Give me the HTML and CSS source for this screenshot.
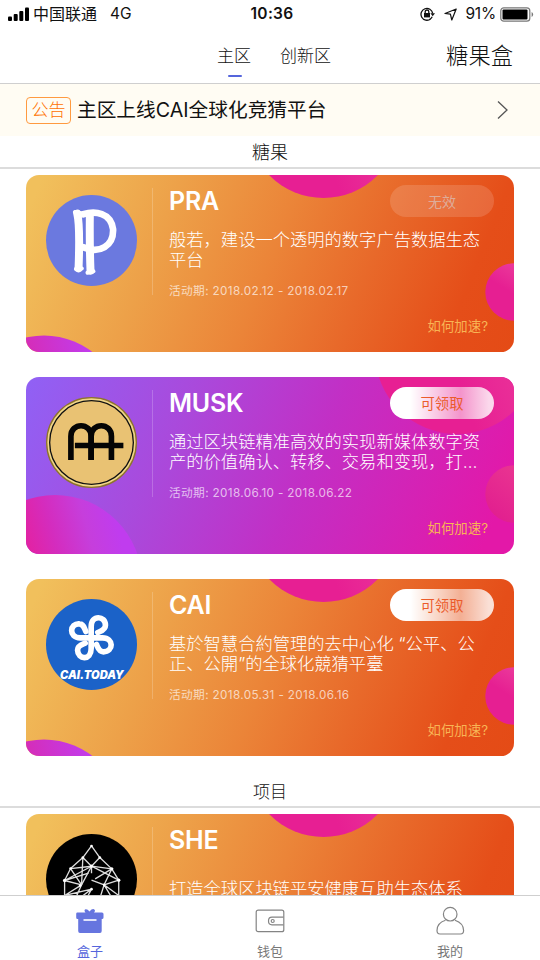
FILE: index.html
```html
<!DOCTYPE html>
<html lang="zh-CN">
<head>
<meta charset="utf-8">
<title>糖果盒</title>
<link rel="stylesheet" href="styles.css">
</head>
<body>
<svg width="0" height="0" class="defs">
  <defs>
    <linearGradient id="pinkTop" x1="0.55" y1="0.8" x2="1.1" y2="0.6"><stop offset="0" stop-color="#e71f93"/><stop offset="1" stop-color="#ec3c9c"/></linearGradient>
    <linearGradient id="pinkSide" x1="0.2" y1="0.8" x2="0.7" y2="0"><stop offset="0" stop-color="#e61f92"/><stop offset="0.4" stop-color="#e61f92"/><stop offset="1" stop-color="#ec409d"/></linearGradient>
    <linearGradient id="violet" x1="0.38" y1="0.1" x2="0.8" y2="0"><stop offset="0" stop-color="#d62cb6"/><stop offset="1" stop-color="#c03df0"/></linearGradient>
    <linearGradient id="violetBig" x1="0.3" y1="0.3" x2="0.85" y2="0.15"><stop offset="0" stop-color="#e6209c"/><stop offset="0.35" stop-color="#d42cbe"/><stop offset="0.7" stop-color="#c63edc"/><stop offset="1" stop-color="#c03cee"/></linearGradient>
    <linearGradient id="redSide" x1="0" y1="0.7" x2="0.6" y2="0"><stop offset="0" stop-color="#e2208f"/><stop offset="1" stop-color="#ea3691"/></linearGradient>
    <symbol id="orangeArt" viewBox="0 0 488 177">
      <circle cx="297.5" cy="-53" r="76" fill="url(#pinkTop)"/>
      <circle cx="488" cy="117" r="28.7" fill="url(#pinkSide)"/>
      <circle cx="18" cy="239.5" r="79" fill="url(#violet)"/>
    </symbol>
    <symbol id="purpleArt" viewBox="0 0 488 177">
      <circle cx="431" cy="-25" r="82" fill="url(#pinkTop)"/>
      <circle cx="488" cy="117" r="28.7" fill="url(#redSide)"/>
      <circle cx="29" cy="205" r="87" fill="url(#violetBig)"/>
    </symbol>
  </defs>
</svg>
<div class="app">
  <header class="status">
    <div class="status-left">
      <svg width="22" height="14" viewBox="0 0 22 14"><rect x="0" y="9.5" width="4" height="4.5" rx="1"/><rect x="5.7" y="7" width="4" height="7" rx="1"/><rect x="11.3" y="4" width="4" height="10" rx="1"/><rect x="17" y="0.5" width="4" height="13.5" rx="1"/></svg>
      <span class="carrier">中国联通</span><span class="network">4G</span>
    </div>
    <div class="clock">10:36</div>
    <div class="status-right">
      <svg width="16" height="14" viewBox="0 0 16 14" fill="none" stroke="#111" stroke-width="1.3"><path d="M10.6 11.9A5.9 5.9 0 1 1 12.7 6.3M12.2 9.7a5.9 5.9 0 0 1-2.8 2.8"/><path d="M10.4 6.2h4.6l-2.3 3z" fill="#111" stroke="none"/><rect x="4" y="6" width="6" height="4.4" fill="#111" stroke="none"/><path d="M5.2 6V4.8a1.8 1.8 0 0 1 3.6 0V6"/></svg>
      <svg class="arrow" width="13" height="13" viewBox="0 0 13 13" fill="none" stroke="#111" stroke-width="1.2" stroke-linejoin="round"><path d="M12.200 1 1 5.500 6.400 6.200 7.800 12z"/></svg>
      <span class="percent">91%</span>
      <svg width="34" height="15" viewBox="0 0 34 15"><rect x=".8" y=".8" width="29" height="13.4" rx="3" fill="none" stroke="#777" stroke-width="1.2"/><rect x="2.5" y="2.5" width="25" height="10" rx="1"/><path d="M31.6 5v5q1.5-.7 1.5-2.5T31.6 5" fill="#777"/></svg>
    </div>
  </header>
  <nav class="top">
    <a class="toptab active">主区</a>
    <a class="toptab">创新区</a>
    <a class="boxlink">糖果盒</a>
  </nav>
  <div class="notice">
    <span class="tag">公告</span>
    <span class="notice-text">主区上线CAI全球化竞猜平台</span>
    <svg width="12" height="20" viewBox="0 0 12 20" fill="none" stroke="#555" stroke-width="1.3"><path d="M1 1.5 10 10 1 18.5"/></svg>
  </div>
  <main class="list">
    <h2 class="section">糖果</h2>
    <article class="card orange">
      <svg class="art"><use href="#orangeArt"/></svg>
      <div class="logo">
        <svg width="91" height="91" viewBox="77 73 274 274"><circle cx="214" cy="210" r="137" fill="#6b79df"/><g fill="none" stroke="#fff" stroke-linecap="round" stroke-linejoin="round"><path d="M171 129Q180 165 175 294" stroke-width="24"/><path d="M209 137Q208 220 211 301" stroke-width="24"/><path d="M164 124L182 128M167 296L185 294M202 307L220 303" stroke-width="12"/><path d="M189 131C225 120 272 126 279 176C281 226 239 252 188 230" stroke-width="20"/></g></svg>
      </div>
      <div class="info">
        <div class="head"><h3>PRA</h3><span class="btn off">无效</span></div>
        <div class="desc"><p>般若，建设一个透明的数字广告数据生态<br>平台</p></div>
        <p class="date">活动期: 2018.02.12 - 2018.02.17</p>
        <a class="more">如何加速?</a>
      </div>
    </article>
    <article class="card purple">
      <svg class="art"><use href="#purpleArt"/></svg>
      <div class="logo">
        <svg width="91" height="91" viewBox="77 80 274 274"><circle cx="214" cy="217" r="135" fill="#f0d587" stroke="#8d742d" stroke-width="4"/><circle cx="214" cy="217" r="126" fill="#e9c273" stroke="#111" stroke-width="4"/><g fill="none" stroke="#050505" stroke-width="17"><path d="M152 270V198C152 156 213 156 213 198V270"/><path d="M213 270V198C213 156 274 156 274 198V270"/><path d="M164 226H310"/></g></svg>
      </div>
      <div class="info">
        <div class="head"><h3>MUSK</h3><span class="btn">可领取</span></div>
        <div class="desc"><p>通过区块链精准高效的实现新媒体数字资<br>产的价值确认、转移、交易和变现，打<span class="dots">…</span></p></div>
        <p class="date">活动期: 2018.06.10 - 2018.06.22</p>
        <a class="more">如何加速?</a>
      </div>
    </article>
    <article class="card orange">
      <svg class="art"><use href="#orangeArt"/></svg>
      <div class="logo">
        <svg width="91" height="91" viewBox="77 86 274 274"><circle cx="214" cy="223" r="137" fill="#1b62c8"/><g fill="none" stroke="#fff" stroke-width="17" stroke-linecap="round"><path d="M213 203V170C213 132 256 136 256 165C256 179 243 182 233 187"/><path d="M213 203H247C282 203 281 245 250 245C236 245 233 232 229 223"/><path d="M213 203V235C213 272 173 270 172 240C172 226 185 223 195 219"/><path d="M213 203H180C144 203 148 158 178 161C192 162 192 174 197 184"/></g><text x="119" y="327" textLength="192" lengthAdjust="spacingAndGlyphs" class="logo-text">CAI.TODAY</text></svg>
      </div>
      <div class="info">
        <div class="head"><h3>CAI</h3><span class="btn">可领取</span></div>
        <div class="desc"><p>基於智慧合約管理的去中心化 “公平、公<br>正、公開”的全球化競猜平臺</p></div>
        <p class="date">活动期: 2018.05.31 - 2018.06.16</p>
        <a class="more">如何加速?</a>
      </div>
    </article>
    <h2 class="section second">项目</h2>
    <article class="card orange">
      <svg class="art"><use href="#orangeArt"/></svg>
      <div class="logo">
        <svg width="91" height="91" viewBox="77 190 274 274"><circle cx="214" cy="327" r="137"/><g fill="none" stroke="#ddd" stroke-width="4" stroke-linejoin="round"><path d="M214 226 188 261 151 294 133 330V375L180 420H250L296 375V329L275 295 239 261Z"/><path d="M188 261 214 287 239 261M188 261 184 343 151 294 214 287 275 295"/><path d="M133 330 214 287 296 329M133 330 205 308M214 287V308M225 325 275 295 252 343 214 329"/><path d="M133 330 184 343 133 375M296 329 252 343 296 375M184 343 214 287M184 343 160 397 214 356 180 420M252 343 235 397 280 390 252 343M133 375 214 356"/></g><g fill="#fff"><circle cx="214" cy="226" r="4"/><circle cx="188" cy="261" r="4"/><circle cx="239" cy="261" r="4"/><circle cx="214" cy="287" r="5"/><circle cx="151" cy="294" r="4"/><circle cx="275" cy="295" r="5"/><circle cx="133" cy="330" r="5"/><circle cx="296" cy="329" r="5"/><circle cx="180" cy="345" r="4"/><circle cx="252" cy="343" r="4"/><circle cx="214" cy="356" r="4"/></g></svg>
      </div>
      <div class="info">
        <div class="head"><h3>SHE</h3></div>
        <div class="desc"><p>打造全球区块链平安健康互助生态体系</p></div>
      </div>
    </article>
  </main>
  <footer class="tabs">
    <a class="tab active">
      <svg width="30" height="30" viewBox="0 0 30 30"><path d="M2 6.5h8.5Q8.500 4 10.500 3.200Q12.500 2.800 14.500 5.500Q17 2.500 19 3.200Q21 4.500 19 6.500H27Q28.500 6.500 28.500 8V11.500Q28.500 13 27 13H26.700V25Q26.700 27 25 27H5Q3.200 27 3.200 25V13H2.500Q1.200 13 1.200 11.500V8Q1.200 6.500 2 6.500Z" fill="#6675df"/><path d="M8.500 14H21.500" stroke="#fff" stroke-width="1.600"/></svg>
      <span>盒子</span>
    </a>
    <a class="tab">
      <svg width="30" height="30" viewBox="0 0 30 30" fill="none" stroke="#848484" stroke-width="1.200"><rect x="1.200" y="4.200" width="27.600" height="21.500" rx="2"/><path d="M28.500 11.200H17Q13.500 11.200 13.500 15T17 18.800H28.500"/><circle cx="17.700" cy="15" r="1.500"/></svg>
      <span>钱包</span>
    </a>
    <a class="tab">
      <svg width="30" height="30" viewBox="0 0 30 30" fill="none" stroke="#848484" stroke-width="1.200"><circle cx="15.200" cy="8.200" r="6.800"/><path d="M10.500 14.300C5 16 2 20 2 24.500Q2 28 5 28H25.500Q28.600 28 28.600 24.500C28.500 20 25 16 20 14.300"/></svg>
      <span>我的</span>
    </a>
  </footer>
</div>
</body>
</html>
```
FILE: styles.css
```css
* { box-sizing: border-box; margin: 0; padding: 0; }
body {
  background: #fff;
  color: #111;
  font-family: Inter, "Noto Sans CJK SC", sans-serif;
}
.defs { position: absolute; }
.app {
  display: flex;
  flex-direction: column;
  width: 540px;
  height: 960px;
  overflow: hidden;
}
.app svg { display: block; flex: none; }

.status {
  display: grid;
  grid-template-columns: 1fr auto 1fr;
  align-items: center;
  height: 28px;
  padding: 0 6px 0 8px;
  font-size: 16px;
  line-height: 26px;
}
.status-left, .status-right { display: flex; align-items: center; }
.status-right { justify-content: flex-end; }
.carrier { margin-left: 3px; font-size: 16px; }
.network { margin-left: 13px; font-size: 15.5px; }
.clock { padding-left: 2px; font-weight: 600; font-size: 15.5px; letter-spacing: .3px; }
.arrow { margin: 0 8px; }
.percent { margin-right: 4px; font-size: 15.5px; letter-spacing: -.2px; }

.top {
  display: flex;
  align-items: center;
  height: 56px;
  padding: 0 27px 0 217px;
  border-bottom: 1px solid #cfcfcf;
  font-size: 17px;
  font-weight: 300;
}
.toptab {
  position: relative;
  margin-right: 29px;
  line-height: 26px;
}
.toptab.active::after {
  content: "";
  position: absolute;
  left: 11px;
  bottom: -8px;
  width: 14px;
  height: 2px;
  border-radius: 1px;
  background: #5565dc;
}
.boxlink { margin-left: auto; font-size: 22.3px; line-height: 30px; }

.notice {
  display: flex;
  align-items: center;
  height: 52px;
  padding: 0 31px 0 26px;
  background: #fffcf3;
}
.tag {
  width: 45px;
  height: 27px;
  border: 1px solid #ff9a40;
  border-radius: 4px;
  color: #ff7200;
  font-size: 17px;
  font-weight: 300;
  line-height: 25px;
  text-align: center;
}
.notice-text { flex: 1; margin-left: 6px; font-size: 19.7px; line-height: 28px; }

.list { flex: 1; min-height: 0; overflow: hidden; }
.section {
  height: 33px;
  margin-bottom: 6px;
  padding-top: 1px;
  border-bottom: 2px solid #dcdcdc;
  font-size: 18px;
  font-weight: 300;
  line-height: 32px;
  text-align: center;
}
.section.second { margin-top: -6px; font-size: 17px; }

.card {
  position: relative;
  display: flex;
  width: 488px;
  height: 177px;
  margin: 0 26px 25px;
  border-radius: 13px;
  overflow: hidden;
  color: #fff;
}
.orange { background: linear-gradient(112deg, #f1c05c 3%, #eda149 28%, #eb8438 50%, #e8692a 68%, #e54e19 87%, #e44b16); }
.purple { background: linear-gradient(115deg, #9061f5 0%, #a94adc 30%, #c22fc5 57%, #e318a8 94%); }
.app .art { position: absolute; inset: 0; width: 488px; height: 177px; }
.logo { position: relative; width: 127px; padding: 19.5px 0 0 20px; }
.logo::after {
  content: "";
  position: absolute;
  right: 0;
  top: 13px;
  width: 1px;
  height: 107px;
  background: rgba(255, 255, 255, .2);
}
.logo-text {
  fill: #fff;
  font: italic 900 36px Inter, sans-serif;
}
.info {
  position: relative;
  display: flex;
  flex: 1;
  flex-direction: column;
  padding: 10px 20px 0 16px;
}
.head { display: flex; justify-content: space-between; height: 32px; }
h3 { font-size: 25px; font-weight: 600; line-height: 33px; letter-spacing: -.2px; }
.btn {
  width: 104px;
  height: 32px;
  border-radius: 16px;
  background: linear-gradient(90deg, #fff 20%, rgba(255, 255, 255, .52) 68%, rgba(255, 255, 255, .82) 95%);
  color: #eb5b2b;
  font-size: 14.3px;
  line-height: 33px;
  text-align: center;
}
.btn.off { background: rgba(255, 255, 255, .14); color: rgba(216, 205, 205, .65); font-size: 14px; }
.desc {
  display: flex;
  align-items: center;
  height: 40px;
  margin-top: 13px;
  font-size: 17.3px;
  font-weight: 300;
  line-height: 20px;
  white-space: nowrap;
}
.dots { letter-spacing: 1px; }
.date {
  margin-top: 13px;
  color: rgba(255, 255, 255, .68);
  font-size: 11.7px;
  line-height: 17px;
  letter-spacing: .37px;
  white-space: nowrap;
}
.more {
  align-self: flex-end;
  margin: 17px 6px 0 0;
  color: #f8b455;
  font-size: 13.4px;
  line-height: 18px;
}

.tabs {
  display: grid;
  grid-template-columns: repeat(3, 1fr);
  height: 65px;
  border-top: 1px solid #cfcfcf;
  background: #fff;
}
.tab {
  display: flex;
  flex-direction: column;
  align-items: center;
  padding-top: 10px;
  color: #777;
  font-size: 13px;
  line-height: 18px;
}
.tab span { margin-top: 6px; }
.tab.active { color: #5565dc; }
```
